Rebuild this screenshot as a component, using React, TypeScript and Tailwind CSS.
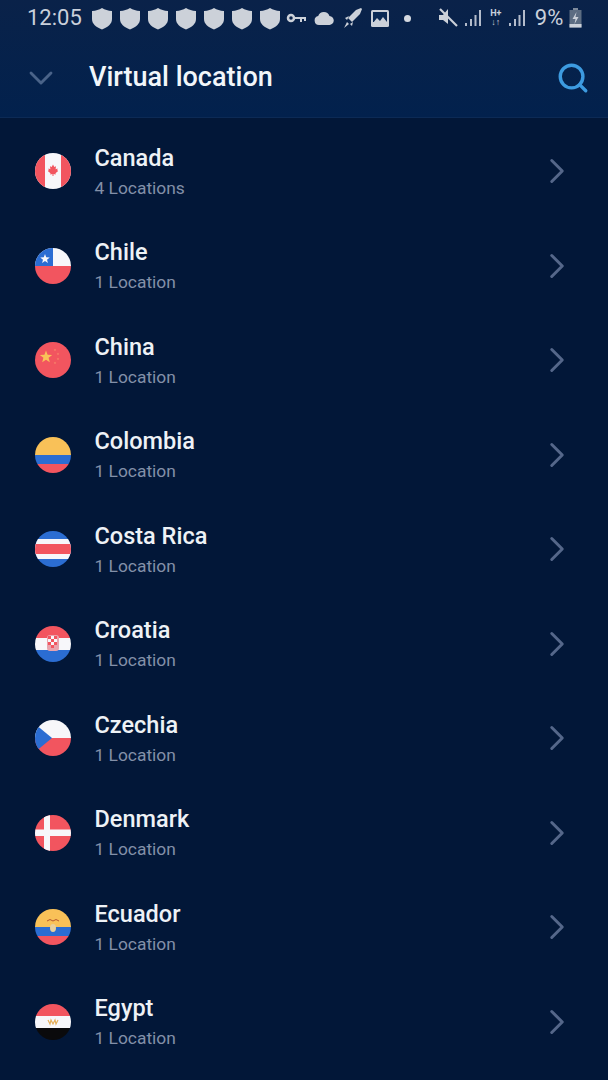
import { ReactNode } from "react";
import { ChevronDown, ChevronRight, Search } from "lucide-react";

const R = "#f2555f";
const W = "#f7f7fa";
const B = "#2b6dd2";
const Y = "#f9c158";

function Flag({ children }: { children: ReactNode }) {
  return (
    <svg width="36" height="36" viewBox="0 0 36 36" className="shrink-0 rounded-full">
      {children}
    </svg>
  );
}

function Star({ x, y, r, fill }: { x: number; y: number; r: number; fill: string }) {
  const pts = Array.from({ length: 10 }, (_, i) => {
    const a = -Math.PI / 2 + (i * Math.PI) / 5;
    const d = i % 2 ? r * 0.42 : r;
    return `${x + d * Math.cos(a)},${y + d * Math.sin(a)}`;
  }).join(" ");
  return <polygon points={pts} fill={fill} />;
}

const flags: Record<string, ReactNode> = {
  Canada: (
    <>
      <rect width="36" height="36" fill={W} />
      <rect width="10" height="36" fill={R} />
      <rect x="26" width="10" height="36" fill={R} />
      <path d="M18 11.500l1.300 2.500 1.700-.7-.4 2.900 2-.7-.3 1.800.9.700-2.700 2.200.3 1.200-2.300-.3V23h-1v-1.900l-2.300.3.300-1.200-2.700-2.200.9-.7-.3-1.800 2 .7-.4-2.900 1.700.7z" fill={R} />
    </>
  ),
  Chile: (
    <>
      <rect width="36" height="18" fill={W} />
      <rect y="18" width="36" height="18" fill={R} />
      <rect width="18" height="18" fill={B} />
      <Star x={10} y={11} r={5} fill="#f7f7fa" />
    </>
  ),
  China: (
    <>
      <rect width="36" height="36" fill={R} />
      <Star x={11} y={15} r={6.5} fill={Y} />
      <Star x={20} y={8} r={1.4} fill="#f8866a" />
      <Star x={23} y={12} r={1.4} fill="#f8866a" />
      <Star x={23} y={17} r={1.4} fill="#f8866a" />
      <Star x={20} y={21} r={1.4} fill="#f8866a" />
    </>
  ),
  Colombia: (
    <>
      <rect width="36" height="18" fill={Y} />
      <rect y="18" width="36" height="9" fill={B} />
      <rect y="27" width="36" height="9" fill={R} />
    </>
  ),
  "Costa Rica": (
    <>
      <rect width="36" height="36" fill={B} />
      <rect y="8" width="36" height="20" fill={W} />
      <rect y="13" width="36" height="10" fill={R} />
    </>
  ),
  Croatia: (
    <>
      <rect width="36" height="12" fill={R} />
      <rect y="12" width="36" height="12" fill={W} />
      <rect y="24" width="36" height="12" fill={B} />
      <rect x="12" y="9" width="12" height="16" rx="3" fill="#e9a3ad" />
      <path d="M13 10h3v3h-3zM19 10h3v3h-3zM16 13h3v3h-3zM13 16h3v3h-3zM19 16h3v3h-3zM16 19h3v3h-3z" fill={R} />
      <path d="M16 10h3v3h-3zM13 13h3v3h-3zM19 13h3v3h-3zM16 16h3v3h-3z" fill={W} />
    </>
  ),
  Czechia: (
    <>
      <rect width="36" height="18" fill={W} />
      <rect y="18" width="36" height="18" fill={R} />
      <path d="M0 4l17 14L0 32z" fill={B} />
    </>
  ),
  Denmark: (
    <>
      <rect width="36" height="36" fill={R} />
      <rect x="9" width="6" height="36" fill={W} />
      <rect y="14.500" width="36" height="6.500" fill={W} />
    </>
  ),
  Ecuador: (
    <>
      <rect width="36" height="18" fill={Y} />
      <rect y="18" width="36" height="9" fill={B} />
      <rect y="27" width="36" height="9" fill={R} />
      <path d="M12 12q3-3 6 0q3-3 6 0" fill="none" stroke="#b5562f" strokeWidth="1" />
      <ellipse cx="18" cy="19" rx="3" ry="4" fill="#e8cf9c" />
    </>
  ),
  Egypt: (
    <>
      <rect width="36" height="12" fill={R} />
      <rect y="12" width="36" height="12" fill={W} />
      <rect y="24" width="36" height="12" fill="#0a0a0c" />
      <path d="M13 16l2 4 1-4 2 4 2-4 1 4 2-4" fill="none" stroke="#e5b05c" strokeWidth="1.2" />
    </>
  ),
};

const countries = [
  ["Canada", "4 Locations"],
  ["Chile", "1 Location"],
  ["China", "1 Location"],
  ["Colombia", "1 Location"],
  ["Costa Rica", "1 Location"],
  ["Croatia", "1 Location"],
  ["Czechia", "1 Location"],
  ["Denmark", "1 Location"],
  ["Ecuador", "1 Location"],
  ["Egypt", "1 Location"],
];

function Shield() {
  return (
    <svg width="22" height="23" viewBox="0 0 22 23">
      <path d="M11 1c3 2 6 2.600 10 3v8c0 5-4 8-10 10.500C5 20 1 17 1 12V4c4-.4 7-1 10-3z" fill="#ccd1d9" />
    </svg>
  );
}

function Bars() {
  return (
    <svg width="18" height="20" viewBox="0 0 18 20" fill="#b4bccb">
      <rect x="1" y="15" width="2" height="3" />
      <rect x="6" y="11" width="2" height="7" />
      <rect x="10.500" y="7" width="2" height="11" />
      <rect x="15" y="2" width="2" height="16" />
    </svg>
  );
}

function StatusBar() {
  return (
    <div className="flex h-[36px] items-center pl-[27px] text-[#c9d0db]">
      <span className="mr-[9px] text-[22px] leading-none">12:05</span>
      <div className="flex gap-[6px]">
        {[0, 1, 2, 3, 4, 5, 6].map((i) => <Shield key={i} />)}
      </div>
      <svg width="21" height="12" viewBox="0 0 21 12" className="ml-[5px]" fill="none" stroke="#ccd1d9" strokeWidth="2.500">
        <circle cx="5" cy="6" r="3" />
        <path d="M8 6h12M15 6v4M19 6v3" strokeWidth="2" />
      </svg>
      <svg width="20" height="14" viewBox="0 0 20 14" className="ml-[7px]" fill="#ccd1d9">
        <path d="M5 14a4.500 4.500 0 0 1-.8-8.900A6 6 0 0 1 15.500 5a4.500 4.500 0 0 1-.5 9z" />
      </svg>
      <svg width="20" height="22" viewBox="0 0 20 22" className="ml-[9px]" fill="#ccd1d9">
        <path d="M18 1l1 1-2 5-8 8-4-4 8-8z" />
        <path d="M6 9L2 11l2 2zM10 15l-1 4-2-2zM4 15l2 2-5 4z" />
      </svg>
      <svg width="18" height="17" viewBox="0 0 18 17" className="ml-[8px]">
        <rect width="18" height="17" rx="1.500" fill="#ccd1d9" />
        <rect x="2" y="2" width="14" height="10" fill="#0b2a55" />
        <path d="M2 13l4-5 3 3 3-4 4 5v3H2z" fill="#ccd1d9" />
      </svg>
      <span className="ml-[15px] size-[7px] rounded-full bg-[#d5d9e0]" />
      <svg width="20" height="22" viewBox="0 0 20 22" className="ml-[27px]" fill="#ccd1d9">
        <path d="M1 8h4l5-6v15l-5-4H1z" />
        <path d="M2 2l17 17" stroke="#ccd1d9" strokeWidth="2.200" />
      </svg>
      <div className="ml-[6px]"><Bars /></div>
      <span className="ml-[8px] flex w-[12px] flex-col items-center text-[9px] font-bold leading-[9px]">
        <span>H+</span>
        <span>↓↑</span>
      </span>
      <div className="ml-[6px]"><Bars /></div>
      <span className="ml-[9px] text-[22px] leading-none">9%</span>
      <svg width="13" height="20" viewBox="0 0 13 20" className="ml-[6px]">
        <rect x="4" y="0" width="5" height="2" fill="#7d8a9c" />
        <rect x="0.500" y="2" width="12" height="17.500" fill="#5d6d82" />
        <rect x="0.500" y="16" width="12" height="3.500" fill="#ccd1d9" />
        <path d="M7.500 4L3.500 11h3l-1 5 4-7h-3z" fill="#ccd1d9" />
      </svg>
    </div>
  );
}

export default function App() {
  return (
    <div className="min-h-[1080px] bg-[#021738] font-['Roboto',sans-serif]">
      <header className="h-[118px] border-b border-[#0c2a55] bg-gradient-to-b from-[#0a2249] to-[#02214d]">
        <StatusBar />
        <div className="flex h-[82px] items-center pt-[1px] pl-[21px] pr-[18px]">
          <ChevronDown size={40} strokeWidth={1.7} className="text-[#4a6389]" />
          <h1 className="ml-[28px] flex-1 text-[27px] font-medium text-[#f2f6fa]">Virtual location</h1>
          <Search size={34} strokeWidth={2.400} className="text-[#3d9be0]" />
        </div>
      </header>
      <ul className="pt-[6px]">
        {countries.map(([name, sub]) => (
          <li key={name} className="flex h-[94.5px] items-center pl-[35px] pr-[30px]">
            <Flag>{flags[name]}</Flag>
            <div className="ml-[23.500px] flex-1 pt-[1px]">
              <div className="text-[23.500px] font-medium leading-[28px] text-[#eef2f6]">{name}</div>
              <div className="mt-[4px] text-[17.400px] leading-[24px] text-[#8390a8]">{sub}</div>
            </div>
            <ChevronRight size={42} strokeWidth={1.700} className="text-[#55678a]" />
          </li>
        ))}
      </ul>
    </div>
  );
}
